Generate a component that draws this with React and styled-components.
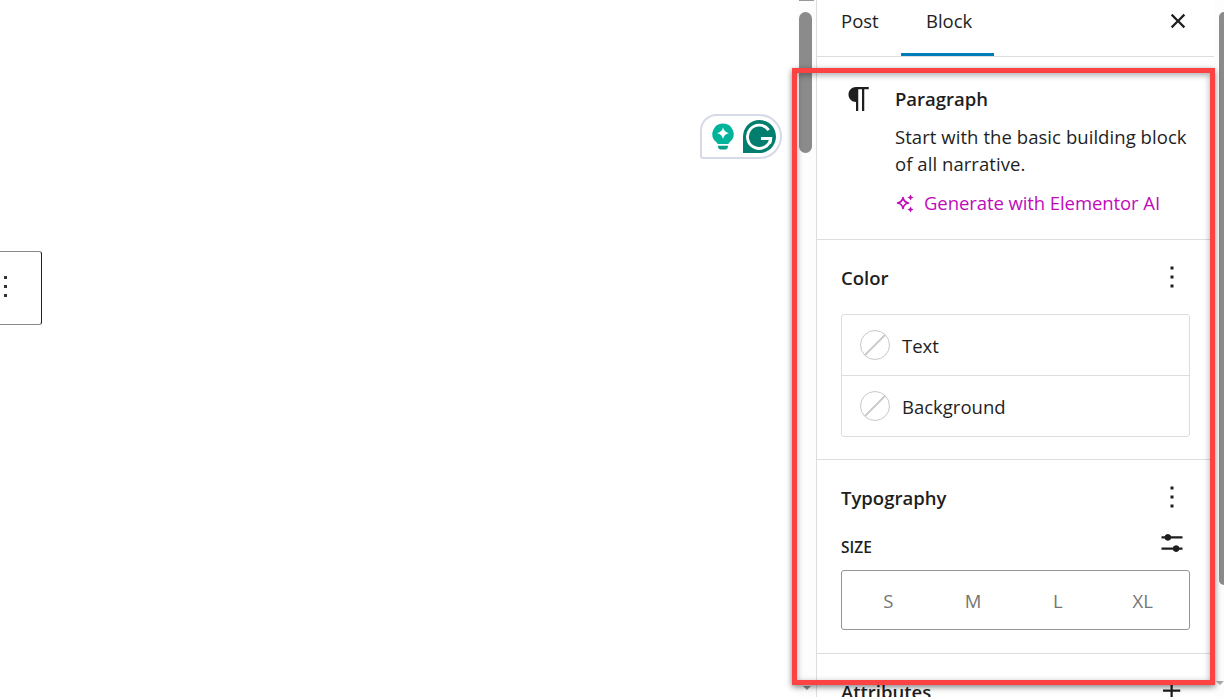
import React from 'react';
import styled, { createGlobalStyle } from 'styled-components';

const GlobalStyle = createGlobalStyle`
  html, body {
    margin: 0;
    padding: 0;
    height: 100%;
    overflow: hidden;
    background: #fff;
  }
  * { box-sizing: border-box; }
`;

const App = () => {
  return (
    <Page>
      <GlobalStyle />
      <Canvas>
        <BlockToolbar>
          <ToolbarDots>
            <i /><i /><i />
          </ToolbarDots>
        </BlockToolbar>
        <GrammarlyWidget>
          <svg width="22" height="27" viewBox="0 0 26 32">
            <path d="M13 0.5a12.500 12.500 0 0 1 7.800 22.300c-.9.7-1.300 1.300-1.300 2.200H6.500c0-.9-.4-1.500-1.300-2.200A12.500 12.500 0 0 1 13 .5z" fill="#00b39b" />
            <path d="M13 5c.8 4 2.700 5.900 7 7-4.300 1.100-6.200 3-7 7-.8-4-2.700-5.900-7-7 4.300-1.100 6.200-3 7-7z" fill="#fff" />
            <path d="M7 27h12c0 2.600-1.400 4.500-3 4.500h-6c-1.600 0-3-1.900-3-4.500z" fill="#00a08b" />
          </svg>
          <svg width="33" height="33" viewBox="0 0 34 34">
            <path d="M0 17a17 17 0 1 1 17 17H0z" fill="#027e6f" />
            <path d="M26.500 10.500A12 12 0 1 0 28.500 19H18.500" fill="none" stroke="#fff" strokeWidth="3" />
            <path d="M28.500 19c0 1.800-.3 3.500-1 5" fill="none" stroke="#fff" strokeWidth="3" />
          </svg>
        </GrammarlyWidget>
      </Canvas>

      <ScrollTrack>
        <ArrowStub />
        <ScrollThumb />
        <ArrowDown />
      </ScrollTrack>

      <Sidebar>
        <TabBar>
          <Tab $width={84} $inset={24}>Post</Tab>
          <Tab $width={93} $inset={25} $active>Block</Tab>
          <CloseButton>
            <svg width="36" height="36" viewBox="0 0 24 24" fill="#1e1e1e">
              <path d="M12 13.06l3.712 3.713 1.061-1.06L13.061 12l3.712-3.712-1.06-1.06L12 10.938 8.288 7.227l-1.061 1.06L10.939 12l-3.712 3.712 1.06 1.061L12 13.061z" />
            </svg>
          </CloseButton>
        </TabBar>

        <BlockCard>
          <BlockIcon>
            <svg width="36" height="36" viewBox="0 0 24 24" fill="#1e1e1e">
              <path d="m9.99609 14v-.2251l.00391.0001v6.225h1.5v-14.5h2.5v14.5h1.5v-14.5h3v-1.5h-8.50391c-2.76142 0-5 2.23858-5 5 0 2.7614 2.23858 5 5 5z" />
            </svg>
          </BlockIcon>
          <BlockInfo>
            <BlockTitle>Paragraph</BlockTitle>
            <BlockDescription>Start with the basic building block of all narrative.</BlockDescription>
            <AiLink>
              <svg width="20" height="20" viewBox="0 0 20 20" fill="none">
                <path d="M8 4.500c.6 3.400 2.100 4.900 5.500 5.500-3.400.6-4.900 2.100-5.500 5.500-.6-3.400-2.100-4.900-5.500-5.500 3.400-.6 4.900-2.100 5.500-5.500z" stroke="#c00bb9" strokeWidth="1.600" strokeLinejoin="round" />
                <path d="M15.500 1.500l1 2 2 1-2 1-1 2-1-2-2-1 2-1zM15.500 13.500l1 2 2 1-2 1-1 2-1-2-2-1 2-1z" fill="#c00bb9" />
              </svg>
              Generate with Elementor AI
            </AiLink>
          </BlockInfo>
        </BlockCard>

        <Section $pad="20px 24px 22px">
          <SectionHeader>
            <SectionTitle>Color</SectionTitle>
            <MoreIcon />
          </SectionHeader>
          <ColorList>
            <ColorRow><Swatch /><span>Text</span></ColorRow>
            <ColorRow><Swatch /><span>Background</span></ColorRow>
          </ColorList>
        </Section>

        <Section $pad="20px 24px 23px">
          <SectionHeader>
            <SectionTitle>Typography</SectionTitle>
            <MoreIcon />
          </SectionHeader>
          <SizeHeader>
            <SizeLabel>SIZE</SizeLabel>
            <SettingsIcon>
              <svg width="36" height="36" viewBox="0 0 24 24" fill="#1e1e1e">
                <path d="m19 7.500h-7.628c-.3089-.87389-1.1423-1.500-2.122-1.500-.97966 0-1.81309.62611-2.12197 1.500h-2.12803v1.500h2.12803c.30888.87389 1.14231 1.500 2.12197 1.500.9797 0 1.8131-.62611 2.122-1.500h7.628z" />
                <path d="m19 15h-2.128c-.3089-.8739-1.1423-1.500-2.122-1.500s-1.8131.6261-2.122 1.500h-7.628v1.500h7.628c.3089.8739 1.1423 1.500 2.122 1.500s1.8131-.6261 2.122-1.500h2.128z" />
              </svg>
            </SettingsIcon>
          </SizeHeader>
          <SizeGroup>
            {['S', 'M', 'L', 'XL'].map((size) => (
              <SizeOption key={size}>{size}</SizeOption>
            ))}
          </SizeGroup>
        </Section>

        <Section $pad="20px 24px">
          <SectionHeader>
            <SectionTitle>Attributes</SectionTitle>
            <IconSlot>
              <svg width="36" height="36" viewBox="0 0 24 24" fill="#1e1e1e">
                <path d="M11 12.500V17.500H12.500V12.500H17.500V11H12.500V6H11V11H6V12.500H11Z" />
              </svg>
            </IconSlot>
          </SectionHeader>
        </Section>
      </Sidebar>

      <EdgeTrack>
        <EdgeThumb />
        <EdgeArrow />
      </EdgeTrack>

      <Highlight />
    </Page>
  );
};

const MoreIcon = () => (
  <IconSlot>
    <svg width="36" height="36" viewBox="0 0 24 24" fill="#1e1e1e">
      <path d="M13 19h-2v-2h2v2zm0-6h-2v-2h2v2zm0-6h-2V5h2v2z" />
    </svg>
  </IconSlot>
);

const Page = styled.div`
  position: relative;
  display: flex;
  width: 100%;
  height: 697px;
  overflow: hidden;
  background: #fff;
  color: #1e1e1e;
  font-family: "Open Sans", "Liberation Sans", sans-serif;
  font-size: 18.5px;
`;

const Canvas = styled.div`
  position: relative;
  width: 797px;
  flex-shrink: 0;
  background: #fff;
`;

const BlockToolbar = styled.div`
  position: absolute;
  left: -10px;
  top: 251px;
  width: 52px;
  height: 74px;
  display: flex;
  align-items: center;
  border: 1px solid #1e1e1e;
  border-top-color: #8a8a8a;
  border-bottom-color: #8a8a8a;
  border-radius: 3px;
`;

const ToolbarDots = styled.div`
  display: flex;
  flex-direction: column;
  gap: 6px;
  margin-left: 13px;
  margin-bottom: 4px;

  i {
    display: block;
    width: 3px;
    height: 3px;
    background: #333;
  }
`;

const GrammarlyWidget = styled.div`
  position: absolute;
  left: 700px;
  top: 114px;
  width: 82px;
  height: 45px;
  display: flex;
  align-items: center;
  gap: 9px;
  padding-left: 10px;
  background: #fff;
  border: 2px solid #d6d9e8;
  border-radius: 17px 23px 23px 3px;
`;

const ScrollTrack = styled.div`
  width: 19px;
  flex-shrink: 0;
  display: flex;
  flex-direction: column;
  align-items: center;
  background: #fdfdfd;
`;

const ArrowStub = styled.div`
  width: 15px;
  height: 1px;
  background: #999;
`;

const ScrollThumb = styled.div`
  width: 13px;
  height: 141px;
  margin: 11px 2px 0 0;
  border-radius: 7px;
  background: #8b8b8b;
`;

const ArrowDown = styled.div`
  width: 0;
  height: 0;
  margin-top: 533px;
  border-left: 4px solid transparent;
  border-right: 4px solid transparent;
  border-top: 4px solid #8b8b8b;
`;

const Sidebar = styled.aside`
  width: 398px;
  flex-shrink: 0;
  height: 100%;
  overflow: hidden;
  background: #fff;
  border-left: 1.5px solid #ddd;
`;

const TabBar = styled.div`
  display: flex;
  height: 57px;
  border-bottom: 1.5px solid #ddd;
`;

const Tab = styled.div`
  width: ${(props) => props.$width}px;
  height: 100%;
  padding: 7px 0 0 ${(props) => props.$inset}px;
  line-height: 28px;
  color: #1e1e1e;
  border-bottom: 3px solid ${(props) => (props.$active ? '#007cba' : 'transparent')};
  margin-bottom: -1px;
`;

const CloseButton = styled.div`
  width: 36px;
  height: 36px;
  margin: 3px 18px 0 auto;
`;

const BlockCard = styled.section`
  display: flex;
  gap: 18px;
  height: 183px;
  padding: 24px 24px 0;
  border-bottom: 1.5px solid #ddd;
`;

const BlockIcon = styled.div`
  width: 36px;
  height: 36px;
  flex-shrink: 0;
`;

const BlockInfo = styled.div`
  flex: 1;
  min-width: 0;
`;

const BlockTitle = styled.div`
  font-weight: 600;
  line-height: 36px;
`;

const BlockDescription = styled.div`
  margin-top: 6px;
  line-height: 27px;
  letter-spacing: 0.06px;
`;

const AiLink = styled.div`
  display: flex;
  align-items: center;
  gap: 9px;
  margin-top: 12px;
  line-height: 28px;
  letter-spacing: -0.08px;
  color: #c00bb9;
`;

const Section = styled.section`
  padding: ${(props) => props.$pad};
  border-bottom: 1.5px solid #ddd;
`;

const SectionHeader = styled.div`
  display: flex;
  align-items: center;
  justify-content: space-between;
  height: 36px;
`;

const SectionTitle = styled.h2`
  margin: 0;
  font-size: 18.5px;
  font-weight: 600;
  line-height: 36px;
`;

const IconSlot = styled.div`
  width: 36px;
  height: 36px;
  margin-bottom: 2px;
`;

const SettingsIcon = styled.div`
  width: 36px;
  height: 36px;
  margin-bottom: 8px;
`;

const ColorList = styled.div`
  margin-top: 18px;
  border: 1.5px solid #ddd;
  border-radius: 3px;
`;

const ColorRow = styled.div`
  display: flex;
  align-items: center;
  gap: 12px;
  height: 60px;
  padding-left: 18px;

  & + & {
    height: 61px;
    border-top: 1.5px solid #ddd;
  }
`;

const Swatch = styled.div`
  width: 30px;
  height: 30px;
  border: 1.5px solid #c8c8c8;
  border-radius: 50%;
  background: linear-gradient(
    135deg,
    transparent calc(50% - 1.2px),
    #cfcfcf calc(50% - 1.2px),
    #cfcfcf calc(50% + 1.2px),
    transparent calc(50% + 1.2px)
  );
`;

const SizeHeader = styled.div`
  display: flex;
  align-items: center;
  justify-content: space-between;
  height: 36px;
  margin-top: 13px;
`;

const SizeLabel = styled.span`
  font-size: 15.5px;
  font-weight: 600;
`;

const SizeGroup = styled.div`
  display: grid;
  grid-template-columns: repeat(4, 1fr);
  align-items: center;
  height: 60px;
  margin-top: 5px;
  padding: 0 4px;
  border: 1.5px solid #949494;
  border-radius: 3px;
`;

const SizeOption = styled.span`
  text-align: center;
  color: #757575;
`;

const EdgeTrack = styled.div`
  flex: 1;
  display: flex;
  flex-direction: column;
  align-items: flex-end;
  background: #fdfdfd;
`;

const EdgeThumb = styled.div`
  width: 5px;
  height: 573px;
  margin-top: 12px;
  border-radius: 5px 0 0 5px;
  background: #8b8b8b;
`;

const EdgeArrow = styled.div`
  width: 0;
  height: 0;
  margin-top: 96px;
  border-left: 4px solid transparent;
  border-right: 4px solid transparent;
  border-top: 4px solid #aaa;
`;

const Highlight = styled.div`
  position: absolute;
  left: 792px;
  top: 68px;
  width: 423px;
  height: 617px;
  border: 5px solid #fb4343;
  box-shadow: 0 2px 6px rgba(0, 0, 0, 0.5), inset 0 2px 6px rgba(0, 0, 0, 0.35);
  pointer-events: none;
`;

export default App;
